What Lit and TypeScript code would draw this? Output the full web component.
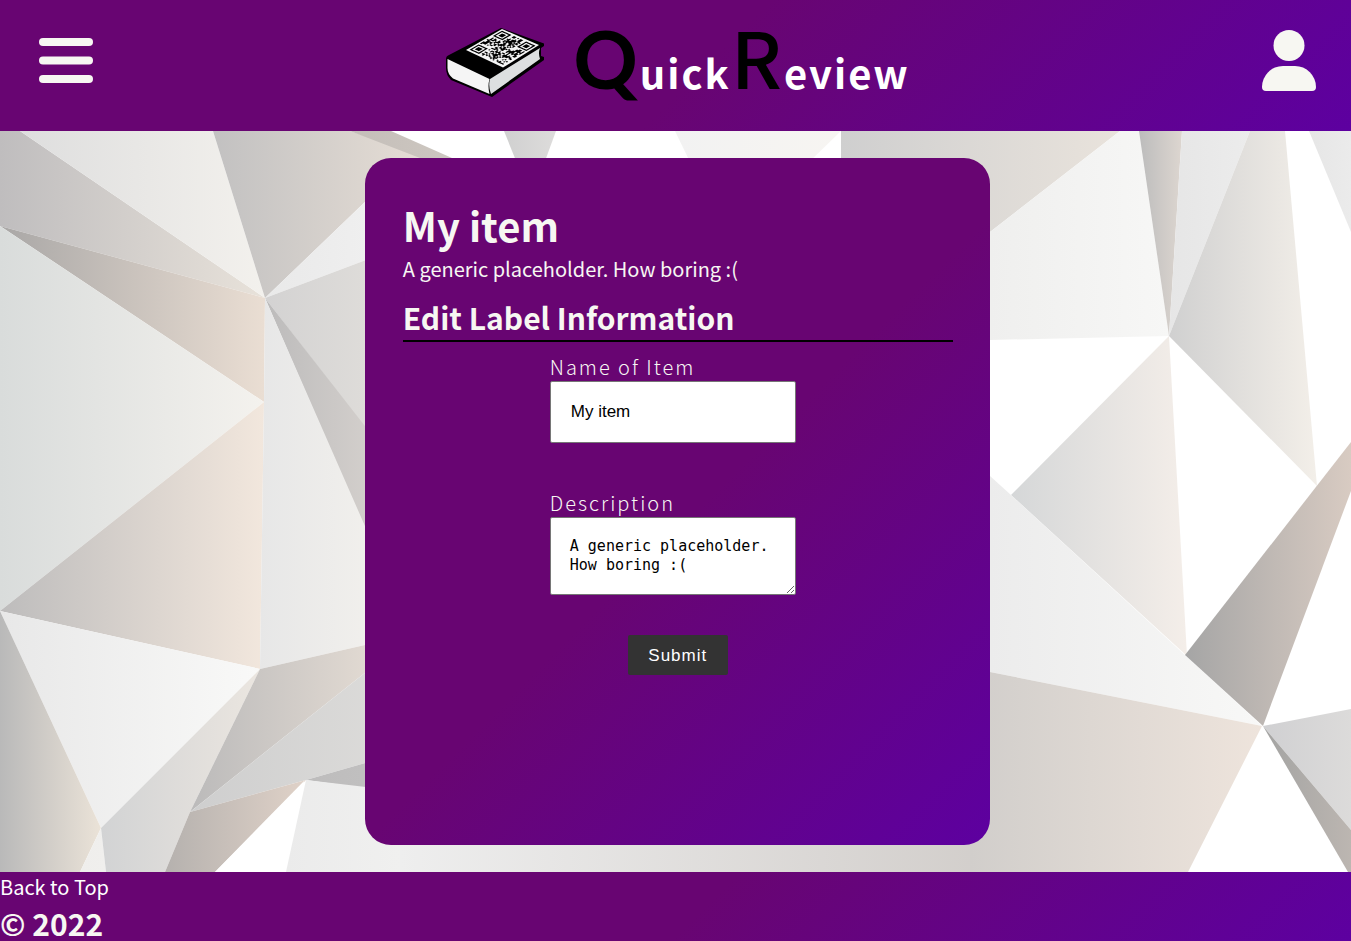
import { LitElement, html, css, svg } from "lit";
import { customElement } from "lit/decorators.js";

type Facet = [points: string, from: string, to: string];

// Each facet is a polygon shaded from left to right.
const FACETS: Facet[] = [
  ["0,0 20,0 265,167 0,95", "#bfbdbe", "#e8e2da"],
  ["20,0 213,0 265,167", "#dedede", "#f3f1ed"],
  ["213,0 350,0 440,30 366,70 265,167", "#c2c1c1", "#e9e0d7"],
  ["350,0 391,0 452,27 470,40 440,40 420,27", "#c4beb9", "#cfc9c2"],
  ["0,95 265,167 264,271", "#a9a7a6", "#eaded3"],
  ["0,95 264,271 0,480", "#d9dcdb", "#f4f2ee"],
  ["264,271 260,538 0,480", "#bdbcbc", "#f2e7dd"],
  ["265,167 366,70 366,129", "#e9e9e9", "#efefef"],
  ["265,167 366,129 366,298", "#d3d2d2", "#dedcd9"],
  ["265,167 400,340 400,480", "#bcbbbb", "#dad5d1"],
  ["265,167 400,475 400,506 260,538 264,271", "#e7e7e7", "#f4f2ee"],
  ["0,480 260,538 101,697", "#e8e8e8", "#f9f9f8"],
  ["0,480 101,697 80,741 0,741", "#b9b9b9", "#ebe3d8"],
  ["101,697 106,741 80,741", "#efeeec", "#f0efed"],
  ["260,538 190,681 165,741 106,741 101,697", "#d2d3d4", "#ebe6e0"],
  ["260,538 400,506 400,514 190,681", "#bbbaba", "#e8dfd6"],
  ["190,681 400,514 400,622 306,649", "#cecece", "#dddcda"],
  ["190,681 306,649 215,741 165,741", "#b5b1ae", "#e0d2c8"],
  ["306,649 400,622 400,662", "#bdbcbc", "#c2c1c1"],
  ["304,650 286,741 215,741", "#ffffff", "#ffffff"],
  ["306,649 400,660 400,741 286,741", "#ebebeb", "#f0f0ef"],
  ["400,670 990,670 990,741 400,741", "#eeeeee", "#d2cecb"],
  ["504,0 556,0 537,52 525,52", "#d0d0d0", "#dddcdb"],
  ["675,0 841,0 805,35 692,35", "#f2f2f2", "#f7f5f2"],
  ["841,0 1120,0 990,101 841,60", "#cfcfcf", "#e9e3dc"],
  ["1120,0 1139,0 1169,205 990,209 990,101", "#efefee", "#f7f7f6"],
  ["1139,0 1182,0 1169,205", "#bcbcbc", "#ddd6d0"],
  ["1182,0 1250,0 1169,205", "#e6e6e6", "#ececec"],
  ["1250,0 1285,0 1317,355 1169,205", "#d0d0d0", "#f3efe9"],
  ["1309,0 1351,0 1351,101", "#e6e6e6", "#ebebeb"],
  ["1169,205 1187,525 1011,364", "#d5d7d8", "#f4eee9"],
  ["990,345 1011,364 1262,595 990,541", "#ececec", "#f8f8f7"],
  ["990,541 1262,595 1188,741 970,741 970,537", "#d1cecb", "#eee4dc"],
  ["1351,311 1351,360 1263,595 1185,524", "#a5a5a5", "#d8cbc2"],
  ["1263,595 1351,578 1351,699", "#d0d0d2", "#dcdbda"],
  ["1263,595 1351,699 1351,741 1348,741", "#a3a3a2", "#bcb6b1"],
];

@customElement("facet-backdrop")
export class FacetBackdrop extends LitElement {
  static styles = css`
    :host { display: block; overflow: hidden; background: #fff; }
    .art { display: block; width: 100%; height: 100%; }
  `;
  render() {
    return html`<svg class="art" viewBox="0 0 1351 741" preserveAspectRatio="xMidYMid slice" aria-hidden="true">
      <defs>
        ${FACETS.map(([, from, to], i) => svg`<linearGradient id="f${i}"><stop offset="0" stop-color=${from}/><stop offset="1" stop-color=${to}/></linearGradient>`)}
      </defs>
      ${FACETS.map(([points], i) => svg`<polygon points=${points} fill="url(#f${i})"/>`)}
    </svg>`;
  }
}

@customElement("book-logo")
export class BookLogo extends LitElement {
  static styles = css`
    :host { display: block; }
    .book { display: block; width: 100px; height: 70px; }
  `;
  // Cells of the code printed on the cover, in a 25 by 25 grid.
  private cells() {
    const n = 25;
    let d = "";
    let seed = 11;
    const finder = (x: number, y: number): boolean | null => {
      for (const [fx, fy] of [[0, 0], [n - 7, 0], [0, n - 7]]) {
        const a = x - fx, b = y - fy;
        if (a >= -1 && a <= 7 && b >= -1 && b <= 7) {
          const r = Math.max(Math.abs(a - 3), Math.abs(b - 3));
          return r === 3 || r <= 1;
        }
      }
      return null;
    };
    for (let y = 0; y < n; y++) {
      for (let x = 0; x < n; x++) {
        seed = (seed * 1103515245 + 12345) % 2147483648;
        const f = finder(x, y);
        if (f === null ? seed / 2147483648 > 0.5 : f) d += `M${x} ${y}h1v1h-1z`;
      }
    }
    return d;
  }
  render() {
    return html`<svg class="book" viewBox="0 0 100 70" role="img" aria-label="QuickReview logo">
      <path d="M1 31Q1 28 4 27L56 0 99 15.500V18L96 20V28L99 29V32L47 69 6 52Q1 47 1 40z" fill="#000"/>
      <path d="M2.500 31 44.500 51Q42.500 58 44.500 66L8 50.500Q2.500 46 2.500 40z" fill="#f5f5f5"/>
      <path d="M45 51 95 20Q93 25 95 31L46 66Q43 58 45 51z" fill="#dddfe0"/>
      <path d="M57 1 94 17 58 39.500 21 22z" fill="#f6f6f6"/>
      <path d=${this.cells()} transform="matrix(1.34 .6 -1.3 .76 57 2.700)" fill="#000"/>
    </svg>`;
  }
}

@customElement("app-root")
export class AppRoot extends LitElement {
  static styles = css`
    :host {
      --purple: linear-gradient(135deg, #680572 52%, #5d00a0 100%);
      --paper: #f7f7f2;
      display: flex;
      flex-direction: column;
      min-height: 100vh;
      color: var(--paper);
      font: 20px/30px "Noto Sans CJK JP", "Noto Sans", sans-serif;
    }
    * { box-sizing: border-box; }
    .bar {
      display: grid;
      grid-template-columns: 1fr auto 1fr;
      height: 131px;
      padding: 0 35px 0 39px;
      background: var(--purple);
    }
    .icon-button {
      border: 0;
      padding: 0;
      background: none;
      cursor: pointer;
      align-self: start;
      margin-top: 30px;
      height: 61px;
    }
    .icon-button.user { justify-self: end; }
    .icon-button.menu { justify-self: start; }
    .icon { display: block; width: 54px; height: 61px; fill: var(--paper); }
    .brand { display: flex; align-items: flex-start; gap: 28px; }
    .logo { margin-top: 28px; }
    .name {
      margin: 0;
      font-size: 40px;
      line-height: 110px;
      letter-spacing: 2px;
      font-weight: 700;
      color: #fff;
      white-space: nowrap;
    }
    .cap { font-size: 78px; font-weight: 500; color: #000; }
    .cap.q { font-family: Lato, sans-serif; font-size: 80px; font-weight: 700; }
    .content { position: relative; flex: 1; display: flex; padding: 27px 0; }
    .backdrop { position: absolute; inset: 0; }
    .card {
      position: relative;
      margin-left: 27%;
      width: 625px;
      max-width: 73%;
      padding: 38px 37px 38px 38px;
      border-radius: 26px;
      background: var(--purple);
    }
    .title { margin: 0; font-size: 40px; line-height: 58px; }
    .lead { margin: 0; font-size: 20px; line-height: 30px; }
    .section {
      margin: 13px 0 0;
      padding-bottom: 3px;
      border-bottom: 2px solid #000;
      font-size: 30px;
      line-height: 40px;
    }
    .form { display: flex; flex-direction: column; align-items: center; padding-top: 11px; }
    .field { display: flex; flex-direction: column; width: 256px; }
    .field + .field { margin-top: 46px; }
    .label { font-size: 20px; line-height: 28px; font-weight: 300; letter-spacing: 2px; }
    .input, .area {
      width: 246px;
      border: 1px solid #767676;
      border-radius: 2px;
      margin: 0;
      background: #fff;
      color: #000;
    }
    .input { height: 62px; padding: 20px; font: 17px "Liberation Sans", sans-serif; }
    .area { height: 78px; padding: 19px; font: 15px/19px "DejaVu Sans Mono", monospace; resize: both; overflow: auto; }
    .submit {
      margin-top: 40px;
      width: 100px;
      height: 40px;
      border: 0;
      border-radius: 2px;
      padding: 2px 0 0;
      background: #333;
      color: #fff;
      font: 17px "Liberation Sans", sans-serif;
      letter-spacing: 1px;
      cursor: pointer;
    }
    .footer { background: var(--purple); }
    .top { display: block; width: max-content; color: #fff; text-decoration: none; }
    .copy { margin: 0; padding-top: 3px; font-size: 30px; line-height: 36px; font-weight: 700; }
  `;

  render() {
    return html`
      <header class="bar" id="top">
        <button class="icon-button menu" aria-label="Menu">
          <svg class="icon" viewBox="0 0 54 61" aria-hidden="true">
            <rect y="8" width="54" height="8" rx="4"/><rect y="26.500" width="54" height="8" rx="4"/><rect y="45" width="54" height="8" rx="4"/>
          </svg>
        </button>
        <div class="brand">
          <book-logo class="logo"></book-logo>
          <h1 class="name"><span class="cap q">Q</span>uick<span class="cap">R</span>eview</h1>
        </div>
        <button class="icon-button user" aria-label="Account">
          <svg class="icon" viewBox="0 0 54 61" aria-hidden="true">
            <circle cx="27" cy="15.500" r="15.500"/><path d="M21 36h12a21 21 0 0 1 21 21q0 4-4 4H4q-4 0-4-4a21 21 0 0 1 21-21z"/>
          </svg>
        </button>
      </header>
      <main class="content">
        <facet-backdrop class="backdrop"></facet-backdrop>
        <section class="card">
          <h2 class="title">My item</h2>
          <p class="lead">A generic placeholder. How boring :(</p>
          <h3 class="section">Edit Label Information</h3>
          <form class="form" @submit=${(e: Event) => e.preventDefault()}>
            <div class="field">
              <label class="label" for="name">Name of Item</label>
              <input class="input" id="name" type="text" value="My item">
            </div>
            <div class="field">
              <label class="label" for="description">Description</label>
              <textarea class="area" id="description" .value=${"A generic placeholder. How boring :("}></textarea>
            </div>
            <button class="submit" type="submit">Submit</button>
          </form>
        </section>
      </main>
      <footer class="footer">
        <a class="top" href="#top">Back to Top</a>
        <p class="copy">© 2022</p>
      </footer>
    `;
  }
}
